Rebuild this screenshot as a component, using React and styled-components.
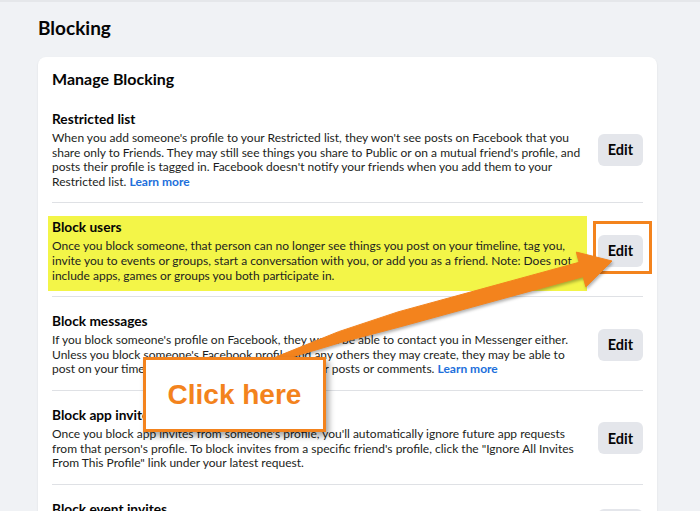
import React from 'react';
import styled, { createGlobalStyle } from 'styled-components';

const ORANGE = '#f3831d';

const GlobalStyle = createGlobalStyle`
  html, body {
    margin: 0;
    overflow: hidden;
  }
  body {
    background: #f0f2f5;
    font-family: Lato, "Noto Sans", Arial, sans-serif;
    color: #1c1e21;
  }
`;

const Page = styled.div`
  position: relative;
  min-height: 100vh;
  box-sizing: border-box;
  padding: 16px 0 0 38px;
  box-shadow: inset 0 2px 0 #e5e7ea;
`;

const Heading = styled.h1`
  margin: 0 0 17px;
  font-size: 19px;
  line-height: 24px;
  font-weight: 700;
  color: #050505;
`;

const Card = styled.div`
  width: 619px;
  box-sizing: border-box;
  background: #fff;
  border-radius: 8px;
  box-shadow: 0 1px 2px rgba(0, 0, 0, 0.1);
  padding: 11px 14px 0;
`;

const CardTitle = styled.h2`
  margin: 0 0 5px;
  font-size: 16px;
  line-height: 22px;
  font-weight: 700;
  color: #050505;
`;

const Row = styled.div`
  display: flex;
  align-items: center;
  justify-content: space-between;
  padding: 15px 0 13px;
  border-bottom: 1px solid #dfe1e5;

  &:last-child {
    border-bottom: none;
  }
`;

const TextBlock = styled.div`
  width: 534px;
  ${(p) => p.$highlight && `
    background: #f3f548;
    margin: -2px -4px -8px;
    padding: 2px 4px 8px;
    width: 531px;
  `}
`;

const Title = styled.div`
  font-size: 13.7px;
  line-height: 18px;
  font-weight: 700;
  color: #050505;
  margin-bottom: 3px;
`;

const Desc = styled.div`
  font-size: 12px;
  line-height: 14.6px;
  color: #1c1e21;
`;

const Link = styled.a`
  color: #216fdb;
  font-weight: 700;
  text-decoration: none;
`;

const EditButton = styled.button`
  width: 45px;
  height: 32px;
  border: none;
  border-radius: 6px;
  background: #e4e6eb;
  font-family: inherit;
  font-size: 14.5px;
  font-weight: 700;
  color: #050505;
  padding: 0;
`;

const Overlay = styled.svg`
  position: absolute;
  top: 0;
  left: 0;
  pointer-events: none;
  overflow: visible;
`;

const Callout = styled.div`
  position: absolute;
  left: 143px;
  top: 357px;
  width: 183px;
  height: 75px;
  box-sizing: border-box;
  border: 3px solid ${ORANGE};
  background: #fff;
  box-shadow: 3px 4px 6px rgba(0, 0, 0, 0.35);
  display: flex;
  align-items: center;
  justify-content: center;
  font-family: "Liberation Sans", Arial, sans-serif;
  font-weight: 700;
  font-size: 28px;
  color: ${ORANGE};
`;

const sections = [
  {
    title: 'Restricted list',
    text: "When you add someone's profile to your Restricted list, they won't see posts on Facebook that you share only to Friends. They may still see things you share to Public or on a mutual friend's profile, and posts their profile is tagged in. Facebook doesn't notify your friends when you add them to your Restricted list.",
    learnMore: true,
  },
  {
    title: 'Block users',
    text: 'Once you block someone, that person can no longer see things you post on your timeline, tag you, invite you to events or groups, start a conversation with you, or add you as a friend. Note: Does not include apps, games or groups you both participate in.',
    highlight: true,
  },
  {
    title: 'Block messages',
    text: "If you block someone's profile on Facebook, they won't be able to contact you in Messenger either. Unless you block someone's Facebook profile and any others they may create, they may be able to post on your timeline, tag you, and comment on your posts or comments.",
    learnMore: true,
  },
  {
    title: 'Block app invites',
    text: "Once you block app invites from someone's profile, you'll automatically ignore future app requests from that person's profile. To block invites from a specific friend's profile, click the \"Ignore All Invites From This Profile\" link under your latest request.",
  },
  {
    title: 'Block event invites',
    text: "Once you block event invites from someone's profile, you'll automatically ignore future event requests from that person's profile.",
  },
];

const arrowPoints = [
  '269.5,360.1', '279.3,355.6', '338.5,331.7', '398,311.9', '579.1,262.3',
  '576.3,252.1', '612,261', '585.9,286.9', '583.1,276.7',
  '402,326.3', '341.5,342.3', '280.7,360.4', '270.5,363.9',
].join(' ');

export default function App() {
  return (
    <Page>
      <GlobalStyle />
      <Heading>Blocking</Heading>
      <Card>
        <CardTitle>Manage Blocking</CardTitle>
        {sections.map((s) => (
          <Row key={s.title}>
            <TextBlock $highlight={s.highlight}>
              <Title>{s.title}</Title>
              <Desc>
                {s.text}
                {s.learnMore && (
                  <>
                    {' '}
                    <Link href="#">Learn more</Link>
                  </>
                )}
              </Desc>
            </TextBlock>
            <EditButton>Edit</EditButton>
          </Row>
        ))}
      </Card>

      <Overlay width="700" height="511" viewBox="0 0 700 511">
        <rect x="594.5" y="222.5" width="56" height="50" fill="none" stroke={ORANGE} strokeWidth="3" />
        <polygon
          points={arrowPoints}
          fill={ORANGE}
          stroke={ORANGE}
          strokeWidth="1"
          strokeLinejoin="round"
          style={{ filter: 'drop-shadow(1px 2px 1.5px rgba(0,0,0,0.3))' }}
        />
      </Overlay>
      <Callout>Click here</Callout>
    </Page>
  );
}
